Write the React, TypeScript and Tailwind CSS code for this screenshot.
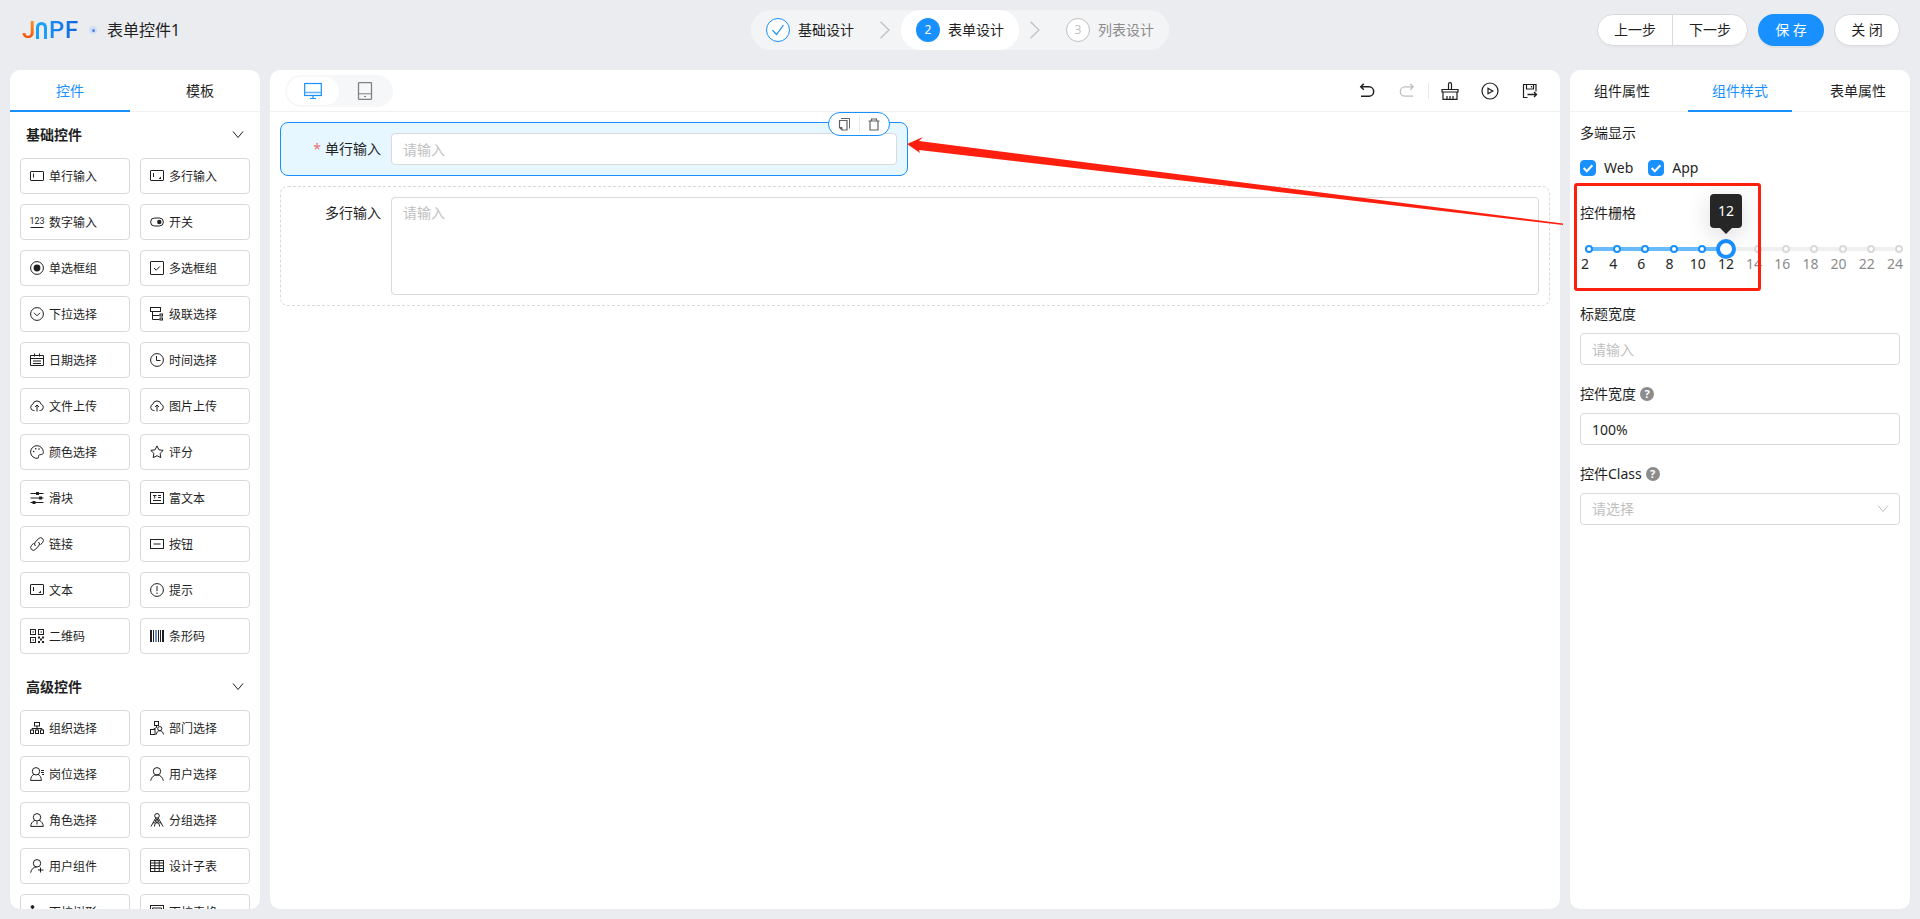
import { useState, type ReactNode } from "react";
import clsx from "clsx";

const Glyph = ({ children, className = "h-3.5 w-3.5" }: { children: ReactNode; className?: string }) => (
  <svg viewBox="0 0 14 14" fill="none" stroke="currentColor" strokeWidth={1} className={clsx("shrink-0 overflow-visible", className)} aria-hidden="true">
    {children}
  </svg>
);

const icons: Record<string, ReactNode> = {
  input: <><rect x="0.5" y="2.5" width="13" height="9" rx="0.5" /><path d="M3.5 4.5v4" /></>,
  textarea: <><rect x="0.5" y="1.5" width="13" height="10" rx="0.5" /><path d="M3.5 4v4" /><path d="M11 7.5V10H8.5z" fill="currentColor" stroke="none" /></>,
  number: <><text x="7" y="9" fontSize="9" textAnchor="middle" fill="currentColor" stroke="none" className="font-['Roboto',sans-serif]">123</text><path d="M0.5 12.5h13" /></>,
  toggle: <><rect x="0.6" y="3" width="12.8" height="8" rx="4" /><circle cx="9.3" cy="7" r="2.2" fill="currentColor" stroke="none" /></>,
  radio: <><circle cx="7" cy="7" r="6.4" /><circle cx="7" cy="7" r="3.4" fill="currentColor" stroke="none" /></>,
  checkbox: <><rect x="0.5" y="0.5" width="13" height="13" rx="0.5" /><path d="M4 7l2.2 2.2L10 5.3" /></>,
  select: <><circle cx="7" cy="7" r="6.4" /><path d="M4 5.8l3 3 3-3" /></>,
  cascader: <><rect x="0.5" y="0.5" width="10" height="4" /><path d="M2.5 4.5v8h7M2.5 8.5h7" /><rect x="10" y="7" width="2.5" height="2" /><rect x="10" y="11" width="2.5" height="2" /></>,
  date: <path d="M0.5 2.5h13v10H0.5zM0.5 5.5h13M4.5 0.5v3M9.5 0.5v3M3 8h8M3 10.5h8" />,
  time: <><circle cx="7" cy="7" r="6.4" /><path d="M6.5 3v4.5h4" /></>,
  upload: <><path d="M4.5 11.5H3.6A3.2 3.2 0 0 1 2.8 5.3a4.3 4.3 0 0 1 8.4 0A3.2 3.2 0 0 1 10.4 11.5h-.9" /><path d="M7 12.5V6M5 8l2-2 2 2" /></>,
  palette: <><path d="M7 .7a6.3 6.3 0 1 0 1 12.5c1.3-.4.2-1.7.6-2.7.5-1 2-.8 3.2-1C13.2 9.2 13.4 8 13.3 6.5 12.9 3.2 10.3.7 7 .7z" /><circle cx="3.7" cy="6.5" r="0.8" fill="currentColor" stroke="none" /><circle cx="5.7" cy="3.8" r="0.8" fill="currentColor" stroke="none" /><circle cx="9" cy="4" r="0.8" fill="currentColor" stroke="none" /></>,
  star: <path d="M7 .9l1.9 3.9 4.3.6-3.1 3 .7 4.3L7 10.7l-3.8 2 .7-4.3-3.1-3 4.3-.6z" />,
  slider: <><path d="M0.5 2.5h13M0.5 7h13M0.5 11.5h13" /><rect x="6" y="1" width="3" height="3" fill="currentColor" stroke="none" /><rect x="9" y="5.5" width="3" height="3" fill="currentColor" stroke="none" /><rect x="2.5" y="10" width="3" height="3" fill="currentColor" stroke="none" /></>,
  richtext: <><rect x="0.5" y="1.5" width="13" height="11" /><path d="M3 4.5h3.5M4.7 4.5v3M8 4.5h3M8 6.500h3M3 9.5h8" /></>,
  link: <><path d="M5.4 9a2.8 2.8 0 0 1 0-4l3.2-3.4a2.7 2.7 0 0 1 4 3.8L10.5 7.8" /><path d="M8.6 5a2.8 2.8 0 0 1 0 4l-3.2 3.4a2.7 2.7 0 0 1-4-3.8L3.5 6.2" /></>,
  button: <><rect x="0.5" y="2.5" width="13" height="9" /><path d="M3.5 7h7" /></>,
  alert: <><circle cx="7" cy="7" r="6.4" /><path d="M7 3v5.2M7 9.5V11" /></>,
  qrcode: <><rect x="0.5" y="0.5" width="5" height="5" /><rect x="8.5" y="0.5" width="5" height="5" /><rect x="0.5" y="8.5" width="5" height="5" /><path d="M2.5 3H4M10.5 3H12M2.5 11H4" /><path d="M8 7.5h2v2H8zM10 9.5h2v2h-2zM12 7.5h2v2h-2zM8 12h2v2H8zM12 12h2v2h-2z" fill="currentColor" stroke="none" /></>,
  barcode: <><path d="M1 1v12M13 1v12" strokeWidth="2" /><path d="M3.5 1v12M8.5 1v12M10.5 1v12" /><path d="M6 1v12" strokeWidth="1.5" stroke="#3b6fb5" /></>,
  org: <><rect x="4.5" y="1.5" width="5" height="3.5" /><path d="M7 5v2.5M2 9V7.5h10V9M7 7.5V9" /><rect x="0.5" y="9" width="3" height="3.5" /><rect x="5.5" y="9" width="3" height="3.5" /><rect x="10.5" y="9" width="3" height="3.5" /></>,
  dept: <><rect x="4.5" y="0.5" width="4" height="4" /><path d="M6.5 4.5v2L3 8.5" /><rect x="0.5" y="8.5" width="4.5" height="5" /><circle cx="9.8" cy="7.6" r="2.1" /><path d="M6.3 13.5c.3-2.2 1.5-3.8 3.5-3.8s3.3 1.6 3.7 3.8" /></>,
  post: <><circle cx="6" cy="4.3" r="3.7" /><path d="M4 7.3C1.700 8.5.7 10.5.6 13.4h10.8c-.1-2.9-1.1-4.9-3.4-6.1M11 3.5h3M11 5.5h3M12 7.5h2" /></>,
  user: <><circle cx="7" cy="4.3" r="3.7" /><path d="M0.7 13.7C1.2 10.4 3.5 8 7 8s5.8 2.4 6.3 5.7" /></>,
  role: <><circle cx="7" cy="4.3" r="3.7" /><path d="M4.8 7.3C2.4 8.5.9 10.5.7 13.4h12.6c-.2-2.9-1.7-4.9-4.1-6.1M7 8.5v3" /></>,
  group: <><circle cx="7" cy="2.8" r="2.3" /><path d="M5.8 4.8L1 13.5M8.2 4.8L13 13.5M7 5.2v3.3" /><circle cx="7" cy="8" r="1.5" /><path d="M4.5 13.5c0-2.2 1-3.8 2.5-3.8s2.500 1.600 2.500 3.800M3 9.800h2.500M8.500 9.800H11" /></>,
  userAdd: <><circle cx="7" cy="4.3" r="3.7" /><path d="M0.7 13.7C1.2 10.4 3.3 8 6.5 8M10.5 8.5v5M8 11h5.5" /></>,
  table: <><rect x="0.5" y="1.5" width="13" height="11" /><path d="M0.5 4h13M0.5 6.7h13M0.5 9.5h13M4.8 1.5v11M9.2 1.5v11" /></>,
  tree: <><circle cx="2.5" cy="2" r="1.4" fill="currentColor" /><path d="M2.5 2v9h6M2.5 6.5h6" /></>,
  popTable: <><rect x="0.5" y="0.5" width="13" height="12" /><path d="M2.5 3h9v7h-9zM2.5 5.5h9" /></>,
};

const basicFields = [
  ["input", "单行输入"], ["textarea", "多行输入"],
  ["number", "数字输入"], ["toggle", "开关"],
  ["radio", "单选框组"], ["checkbox", "多选框组"],
  ["select", "下拉选择"], ["cascader", "级联选择"],
  ["date", "日期选择"], ["time", "时间选择"],
  ["upload", "文件上传"], ["upload", "图片上传"],
  ["palette", "颜色选择"], ["star", "评分"],
  ["slider", "滑块"], ["richtext", "富文本"],
  ["link", "链接"], ["button", "按钮"],
  ["textarea", "文本"], ["alert", "提示"],
  ["qrcode", "二维码"], ["barcode", "条形码"],
];

const advancedFields = [
  ["org", "组织选择"], ["dept", "部门选择"],
  ["post", "岗位选择"], ["user", "用户选择"],
  ["role", "角色选择"], ["group", "分组选择"],
  ["userAdd", "用户组件"], ["table", "设计子表"],
  ["tree", "下拉树形"], ["popTable", "下拉表格"],
];

const ChevronDown = ({ className }: { className: string }) => (
  <svg viewBox="0 0 12 12" fill="none" stroke="currentColor" className={className} aria-hidden="true">
    <path d="M1 2.5l5 6 5-6" />
  </svg>
);

const FieldGroup = ({ title, fields }: { title: string; fields: string[][] }) => (
  <section className="mb-2.5">
    <button type="button" className="flex h-[46px] w-full items-center justify-between px-4">
      <span className="font-bold">{title}</span>
      <ChevronDown className="h-3 w-3" />
    </button>
    <div className="grid grid-cols-2 gap-2.5 px-2.5">
      {fields.map(([icon, label]) => (
        <button
          key={label}
          type="button"
          className="flex h-9 items-center gap-[5px] rounded border border-[#d9d9d9] bg-white px-[9px] text-xs"
        >
          <Glyph>{icons[icon]}</Glyph>
          <span className="pt-0.5">{label}</span>
        </button>
      ))}
    </div>
  </section>
);

const Logo = () => (
  <div role="img" aria-label="JNPF" className="flex items-center pl-0.5 font-[Roboto,sans-serif] text-2xl leading-6 font-medium">
    <span className="w-3.5 bg-linear-to-b from-[#ff9a1f] to-[#f0400f] bg-clip-text text-transparent">J</span>
    <span className="h-[17px] w-[11px] rounded-t-full border-3 border-b-0 border-[#1aa0f8]" />
    <span className="ml-0.5 w-4 bg-linear-to-r from-[#1a8ff0] to-[#1478e6] bg-clip-text text-transparent">P</span>
    <span className="w-3.5 bg-linear-to-r from-[#1478e6] to-[#0f62d8] bg-clip-text text-transparent">F</span>
  </div>
);

const StepArrow = () => (
  <svg viewBox="0 0 10 18" fill="none" stroke="#bfbfbf" strokeWidth={1.2} className="mx-[11px] h-[18px] w-2.5" aria-hidden="true">
    <path d="M0.5 0.8L9 9l-8.5 8.2" />
  </svg>
);

const Header = () => (
  <header className="grid h-[60px] shrink-0 grid-cols-[1fr_auto_1fr] items-center px-5">
    <div className="flex items-center">
      <Logo />
      <span className="mx-2.5 flex h-2 w-2 items-center justify-center rounded-full bg-[#d3def5]">
        <span className="h-[3px] w-[3px] rounded-full bg-[#4d86f0]" />
      </span>
      <h1 className="text-base">表单控件1</h1>
    </div>
    <nav className="flex h-10 items-center rounded-full bg-[#f3f4f6]">
      <button type="button" className="flex h-10 items-center gap-2 rounded-full px-[15px]">
        <span className="flex h-6 w-6 items-center justify-center rounded-full border border-[#1890ff] bg-white text-[#1890ff]">
          <Glyph>
            <path d="M1.5 7.2l4 4.3 7-9.5" strokeWidth="1.2" />
          </Glyph>
        </span>
        基础设计
      </button>
      <StepArrow />
      <button type="button" aria-current="step" className="flex h-10 items-center gap-2 rounded-full bg-white px-[15px]">
        <span className="flex h-6 w-6 items-center justify-center rounded-full bg-[#1890ff] text-xs text-white">2</span>
        表单设计
      </button>
      <StepArrow />
      <button type="button" className="flex h-10 items-center gap-2 rounded-full px-[15px] text-[#8c8c8c]">
        <span className="flex h-6 w-6 items-center justify-center rounded-full border border-[#bfbfbf] bg-white text-xs text-[#bfbfbf]">3</span>
        列表设计
      </button>
    </nav>
    <div className="flex justify-end gap-2.5">
      <div className="flex">
        <button type="button" className="h-8 rounded-l-full border border-[#d9d9d9] bg-white px-4 shadow-[0_2px_0_#00000005]">上一步</button>
        <button type="button" className="-ml-px h-8 rounded-r-full border border-[#d9d9d9] bg-white px-4 shadow-[0_2px_0_#00000005]">下一步</button>
      </div>
      <button type="button" className="h-8 w-[66px] rounded-full bg-[#1890ff] text-white shadow-[0_2px_0_#0000000b]">保 存</button>
      <button type="button" className="h-8 w-[66px] rounded-full border border-[#d9d9d9] bg-white shadow-[0_2px_0_#00000005]">关 闭</button>
    </div>
  </header>
);

const TabButton = ({ active, className, children }: { active?: boolean; className: string; children: ReactNode }) => (
  <button
    type="button"
    role="tab"
    aria-selected={!!active}
    className={clsx("-mb-px h-[42px] border-b-2 pt-0.5", active ? "border-[#1890ff] text-[#1890ff]" : "border-transparent", className)}
  >
    {children}
  </button>
);

const WidgetPanel = () => (
  <aside className="flex w-[250px] shrink-0 flex-col overflow-hidden rounded-[10px] bg-white">
    <div role="tablist" className="flex shrink-0 gap-2.5 border-b border-[#f0f0f0]">
      <TabButton active className="w-[120px]">控件</TabButton>
      <TabButton className="w-[120px]">模板</TabButton>
    </div>
    <div className="min-h-0 flex-1 overflow-hidden">
      <FieldGroup title="基础控件" fields={basicFields} />
      <FieldGroup title="高级控件" fields={advancedFields} />
    </div>
  </aside>
);

const ToolButton = ({ label, disabled, children }: { label: string; disabled?: boolean; children: ReactNode }) => (
  <button type="button" aria-label={label} disabled={disabled} className="flex h-8 w-10 items-center justify-center disabled:text-[#bfbfbf]">
    <svg viewBox="0 0 18 18" fill="none" stroke="currentColor" strokeWidth={1.2} className="h-[18px] w-[18px]" aria-hidden="true">
      {children}
    </svg>
  </button>
);

const Toolbar = () => (
  <div className="flex h-[42px] shrink-0 items-center justify-between border-b border-[#f0f0f0] pr-2.5 pl-[15px]">
    <div className="flex h-8 rounded-full bg-[#f6f7f9] p-0.5">
      <button type="button" aria-label="Web" aria-pressed="true" className="flex h-7 w-[52px] items-center justify-center rounded-full bg-white text-[#1890ff]">
        <svg viewBox="0 0 18 18" fill="none" stroke="currentColor" className="h-[18px] w-[18px]" aria-hidden="true">
          <rect x="0.7" y="1.5" width="16.6" height="12" strokeWidth="1.2" />
          <path d="M1 10.5h16" stroke="#69b5ff" strokeWidth="1.6" />
          <path d="M9 13.5V16M6 16.5h6" strokeWidth="1.2" />
        </svg>
      </button>
      <button type="button" aria-label="App" aria-pressed="false" className="flex h-7 w-[52px] items-center justify-center rounded-full text-[#808080]">
        <svg viewBox="0 0 18 18" fill="none" stroke="currentColor" className="h-[18px] w-[18px]" aria-hidden="true">
          <rect x="2.5" y="0.7" width="13" height="16.6" rx="0.5" strokeWidth="1.3" />
          <path d="M2.5 11.8h13M8 14.5h2" />
        </svg>
      </button>
    </div>
    <div className="flex items-center">
      <ToolButton label="撤销">
        <path d="M5.8 1.8l-3 3 3 3M2.8 4.8H11a4.7 4.7 0 0 1 0 9.4H3" strokeWidth="1.5" />
      </ToolButton>
      <ToolButton label="重做" disabled>
        <path d="M12.2 1.8l3 3-3 3M15.2 4.8H7a4.7 4.7 0 0 0 0 9.4h8" strokeWidth="1.3" />
      </ToolButton>
      <span className="mx-px h-4 w-px bg-[#e8e8e8]" />
      <ToolButton label="清空">
        <path d="M7.5 7V2.2a1.5 1.5 0 0 1 3 0V7M1 7.5h16V10H1zM2 10v7.3h14V10M6 17v-3M9 17v-3M12 17v-3" />
      </ToolButton>
      <ToolButton label="预览">
        <circle cx="9" cy="9" r="8" />
        <path d="M7 6.2v5.6L11.8 9z" />
      </ToolButton>
      <ToolButton label="保存">
        <path d="M6.5 15.5h-4v-13H15v7M5.5 2.5V7h7V2.5M10.5 4v1.5" />
        <path d="M6.5 12.5H15M13 10l2.5 2.5L13 15" strokeWidth="1.4" />
      </ToolButton>
    </div>
  </div>
);

// Tapered pointer from the grid setting to the field it resizes
const CalloutArrow = () => (
  <svg viewBox="0 0 656 96" className="pointer-events-none absolute top-2.5 left-full z-20 h-24 w-[656px]" fill="#ff1f0f" aria-hidden="true">
    <path d="M0 11L16 4l-4 4L656 90.5V92L12 17l1 3z" />
  </svg>
);

const Canvas = () => (
  <main className="flex min-w-0 flex-1 flex-col rounded-[10px] bg-white">
    <Toolbar />
    <div className="grid grid-cols-2 gap-x-3.5 gap-y-2.5 p-2.5">
      <div className="relative flex rounded-lg border border-[#1890ff] bg-[#e6f7ff] p-2.5">
        <label htmlFor="field-input" className="w-[100px] shrink-0 pr-2.5 text-right leading-8">
          <span className="mr-1 text-[#ed6f6f]">*</span>单行输入
        </label>
        <input
          id="field-input"
          placeholder="请输入"
          className="h-8 min-w-0 flex-1 rounded border border-[#d9d9d9] bg-white px-[11px] outline-none placeholder:text-[#bfbfbf]"
        />
        <div className="absolute -top-[11px] right-[17px] flex h-6 w-[62px] items-center rounded-full border border-[#1890ff] bg-white text-[#606266]">
          <button type="button" aria-label="复制" className="flex flex-1 justify-center">
            <Glyph>
              <path d="M4 1.5h8.5v10" />
              <path d="M2.5 3.5H10V13H5l-2.5-2.500z" strokeWidth="1.2" />
              <path d="M2.5 10.5H5V13z" fill="currentColor" />
            </Glyph>
          </button>
          <span className="h-4 w-px bg-[#e8e8e8]" />
          <button type="button" aria-label="删除" className="flex flex-1 justify-center">
            <Glyph>
              <path d="M1.5 4h11M4.5 3.5V2h5v1.5M3 4v9h8V4" strokeWidth="1.2" />
            </Glyph>
          </button>
        </div>
        <CalloutArrow />
      </div>
      <div className="col-span-2 flex rounded-lg border border-dashed border-[#d9d9d9] p-2.5">
        <label htmlFor="field-textarea" className="w-[100px] shrink-0 pr-2.5 text-right leading-8">多行输入</label>
        <textarea
          id="field-textarea"
          placeholder="请输入"
          className="h-[98px] min-w-0 flex-1 resize-none rounded border border-[#d9d9d9] bg-white px-[11px] py-1 leading-[22px] outline-none placeholder:text-[#bfbfbf]"
        />
      </div>
    </div>
  </main>
);

const CheckBox = ({ label }: { label: string }) => (
  <label className="flex items-center gap-2">
    <span className="relative flex h-4 w-4">
      <input type="checkbox" defaultChecked className="peer h-4 w-4 appearance-none rounded border border-[#d9d9d9] checked:border-[#1890ff] checked:bg-[#1890ff]" />
      <svg viewBox="0 0 16 16" fill="none" stroke="white" strokeWidth={2} className="pointer-events-none absolute inset-0 hidden peer-checked:block" aria-hidden="true">
        <path d="M3.7 8l3.1 3.2 5.6-6" />
      </svg>
    </span>
    {label}
  </label>
);

const HelpIcon = () => (
  <span className="flex h-3.5 w-3.5 items-center justify-center rounded-full bg-[#8c8c8c] text-[11px] leading-3.5 font-bold text-white">?</span>
);

const marks = [2, 4, 6, 8, 10, 12, 14, 16, 18, 20, 22, 24];

const GridSlider = () => {
  const [span, setSpan] = useState(12);
  const percent = (value: number) => `${((value - 2) / 22) * 100}%`;

  return (
    <div className="relative mx-[5px] h-[53px]">
      <div className="absolute inset-x-0 top-[15px] h-1 rounded-sm bg-[#f0f0f0]" />
      <div className="absolute top-[15px] left-0 h-1 rounded-sm bg-[#69bbff]" style={{ width: percent(span) }} />
      {marks.map((mark) => (
        <span
          key={mark}
          className={clsx("absolute top-[13px] h-2 w-2 rounded-full border-2 bg-white", mark <= span ? "border-[#1890ff]" : "border-[#d9d9d9]")}
          style={{ left: percent(mark) }}
        />
      ))}
      {marks.map((mark) => (
        <span
          key={mark}
          className={clsx("absolute top-[21px] -translate-x-1/2 leading-[22px]", mark <= span ? "text-[#262626]" : "text-[#8c8c8c]")}
          style={{ left: percent(mark) }}
        >
          {mark}
        </span>
      ))}
      <div className="absolute top-[7px] h-5 w-5 -translate-x-1/2 rounded-full border-4 border-[#1890ff] bg-white" style={{ left: percent(span) }}>
        <div role="tooltip" className="absolute bottom-[27px] left-1/2 flex h-[34px] w-8 -translate-x-1/2 items-center justify-center rounded bg-[#262626] text-white shadow-[0_6px_24px_#00000026]">
          {span}
          <span className="absolute top-full border-x-6 border-t-6 border-x-transparent border-t-[#262626]" />
        </div>
      </div>
      <input
        id="grid-span"
        type="range"
        min={2}
        max={24}
        step={2}
        value={span}
        onChange={(e) => setSpan(Number(e.target.value))}
        className="absolute inset-x-0 top-[7px] h-5 w-full cursor-pointer opacity-0"
      />
    </div>
  );
};

const StylePanel = () => (
  <aside className="flex w-[340px] shrink-0 flex-col rounded-[10px] bg-white">
    <div role="tablist" className="flex shrink-0 justify-between border-b border-[#f0f0f0]">
      <TabButton className="px-6">组件属性</TabButton>
      <TabButton active className="px-6">组件样式</TabButton>
      <TabButton className="px-6">表单属性</TabButton>
    </div>
    <div className="flex flex-col gap-2.5 px-2.5 pt-0.5">
      <fieldset>
        <legend className="leading-[38px]">多端显示</legend>
        <div className="flex h-8 items-center gap-[15px]">
          <CheckBox label="Web" />
          <CheckBox label="App" />
        </div>
      </fieldset>
      <div className="relative">
        <label htmlFor="grid-span" className="block leading-[38px]">控件栅格</label>
        <GridSlider />
        <div className="pointer-events-none absolute -top-[11px] -left-1.5 h-[108px] w-[187px] rounded-[3px] border-3 border-[#ff1f0f]" />
      </div>
      <div>
        <label htmlFor="label-width" className="block leading-[38px]">标题宽度</label>
        <input id="label-width" placeholder="请输入" className="h-8 w-full rounded border border-[#d9d9d9] px-[11px] outline-none placeholder:text-[#bfbfbf]" />
      </div>
      <div>
        <label htmlFor="field-width" className="flex items-center gap-1 leading-[38px]">
          控件宽度 <HelpIcon />
        </label>
        <input id="field-width" defaultValue="100%" className="h-8 w-full rounded border border-[#d9d9d9] px-[11px] outline-none" />
      </div>
      <div>
        <label htmlFor="field-class" className="flex items-center gap-1 leading-[38px]">
          控件Class <HelpIcon />
        </label>
        <div className="relative">
          <select id="field-class" defaultValue="" className="h-8 w-full appearance-none rounded border border-[#d9d9d9] bg-white px-[11px] text-[#bfbfbf] outline-none">
            <option value="">请选择</option>
          </select>
          <ChevronDown className="pointer-events-none absolute top-2.5 right-[11px] h-3 w-3 text-[#bfbfbf]" />
        </div>
      </div>
    </div>
  </aside>
);

const App = () => {
  return (
    <div className="flex h-screen flex-col overflow-hidden bg-[#ebecf0] font-['Noto_Sans','Noto_Sans_CJK_SC',sans-serif] text-sm text-[#1f1f1f]">
      <Header />
      <div className="flex min-h-0 flex-1 gap-2.5 p-2.5">
        <WidgetPanel />
        <Canvas />
        <StylePanel />
      </div>
    </div>
  );
};

export default App;
